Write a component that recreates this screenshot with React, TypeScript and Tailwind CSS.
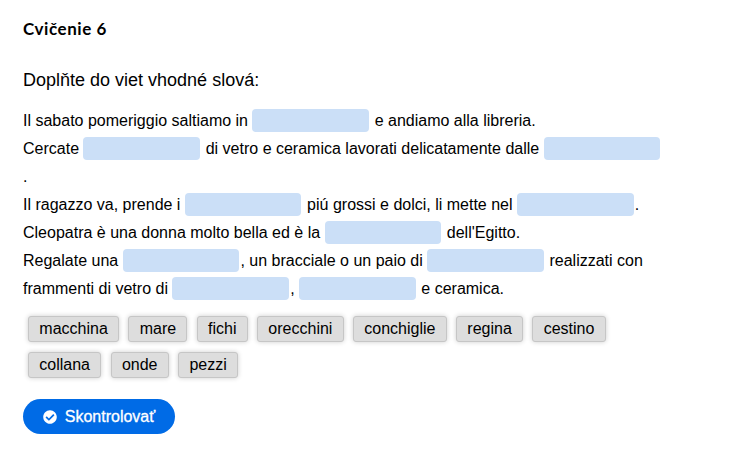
import React from 'react'
import { FaCheckCircle } from 'react-icons/fa'

// null marks a blank the learner has to fill in
const sentences: (string | null)[][] = [
  ['Il sabato pomeriggio saltiamo in ', null, ' e andiamo alla libreria.'],
  ['Cercate ', null, ' di vetro e ceramica lavorati delicatamente dalle ', null, ' .'],
  ['Il ragazzo va, prende i ', null, ' piú grossi e dolci, li mette nel ', null, '.'],
  ['Cleopatra è una donna molto bella ed è la ', null, " dell'Egitto."],
  [
    'Regalate una ',
    null,
    ', un bracciale o un paio di ',
    null,
    ' realizzati con frammenti di vetro di ',
    null,
    ', ',
    null,
    ' e ceramica.',
  ],
]

const words = [
  'macchina',
  'mare',
  'fichi',
  'orecchini',
  'conchiglie',
  'regina',
  'cestino',
  'collana',
  'onde',
  'pezzi',
]

const Blank: React.FC = () => (
  <span className="inline-block align-middle w-[116.5px] h-[23px] mr-[1.3px] -mt-px mb-[2px] rounded-[4px] bg-[#cbdff7]"></span>
)

const Word: React.FC<{ label: string }> = ({ label }) => (
  <button className="h-[26px] px-[10.3px] rounded-[3px] border border-[#c6c6c6] bg-[#dddddd] leading-[24px] shadow-[0_0_5px_rgba(0,0,0,0.2)]">
    {label}
  </button>
)

export default function App() {
  return (
    <div className="w-[735px] h-[450px] bg-white pl-[23px] pt-[16px] text-black text-[16px] font-['Liberation_Sans',Arial,sans-serif]">
      <h1 className="h-[26px] text-[17px] leading-[26px] tracking-[0.55px] font-bold font-['Lato',sans-serif]">Cvičenie 6</h1>
      <p className="mt-[25px] h-[26px] text-[18px] leading-[26px]">Doplňte do viet vhodné slová:</p>

      <div className="mt-[14px] w-[640px] leading-[28px]">
        {sentences.map((parts, i) => (
          <p key={i}>
            {parts.map((part, j) => (part === null ? <Blank key={j} /> : part))}
          </p>
        ))}
      </div>

      <div className="mt-[13px] ml-[5px] w-[600px] flex flex-wrap gap-x-[9.3px] gap-y-[10px]">
        {words.map((word) => (
          <Word key={word} label={word} />
        ))}
      </div>

      <button className="mt-[21px] w-[152px] h-[35px] flex items-center justify-center gap-[8px] rounded-full bg-[#006be6] text-white [-webkit-text-stroke:0.3px_white]">
        <FaCheckCircle className="w-[14px] h-[14px]" />
        Skontrolovať
      </button>
    </div>
  )
}
